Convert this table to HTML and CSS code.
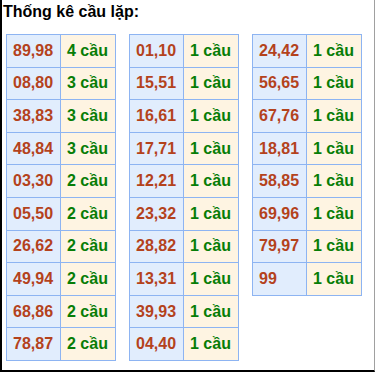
FILE: index.html
```html
<!DOCTYPE html>
<html>
<head>
<meta charset="utf-8">
<link rel="stylesheet" href="styles.css">
</head>
<body>
<div class="box">
  <div class="title">Thống kê cầu lặp:</div>
  <div class="tables">
    <table class="tk">
      <tr><td class="n">89,98</td><td class="c">4 cầu</td></tr>
      <tr><td class="n">08,80</td><td class="c">3 cầu</td></tr>
      <tr><td class="n">38,83</td><td class="c">3 cầu</td></tr>
      <tr><td class="n">48,84</td><td class="c">3 cầu</td></tr>
      <tr><td class="n">03,30</td><td class="c">2 cầu</td></tr>
      <tr><td class="n">05,50</td><td class="c">2 cầu</td></tr>
      <tr><td class="n">26,62</td><td class="c">2 cầu</td></tr>
      <tr><td class="n">49,94</td><td class="c">2 cầu</td></tr>
      <tr><td class="n">68,86</td><td class="c">2 cầu</td></tr>
      <tr><td class="n">78,87</td><td class="c">2 cầu</td></tr>
    </table>
    <table class="tk">
      <tr><td class="n">01,10</td><td class="c">1 cầu</td></tr>
      <tr><td class="n">15,51</td><td class="c">1 cầu</td></tr>
      <tr><td class="n">16,61</td><td class="c">1 cầu</td></tr>
      <tr><td class="n">17,71</td><td class="c">1 cầu</td></tr>
      <tr><td class="n">12,21</td><td class="c">1 cầu</td></tr>
      <tr><td class="n">23,32</td><td class="c">1 cầu</td></tr>
      <tr><td class="n">28,82</td><td class="c">1 cầu</td></tr>
      <tr><td class="n">13,31</td><td class="c">1 cầu</td></tr>
      <tr><td class="n">39,93</td><td class="c">1 cầu</td></tr>
      <tr><td class="n">04,40</td><td class="c">1 cầu</td></tr>
    </table>
    <table class="tk">
      <tr><td class="n">24,42</td><td class="c">1 cầu</td></tr>
      <tr><td class="n">56,65</td><td class="c">1 cầu</td></tr>
      <tr><td class="n">67,76</td><td class="c">1 cầu</td></tr>
      <tr><td class="n">18,81</td><td class="c">1 cầu</td></tr>
      <tr><td class="n">58,85</td><td class="c">1 cầu</td></tr>
      <tr><td class="n">69,96</td><td class="c">1 cầu</td></tr>
      <tr><td class="n">79,97</td><td class="c">1 cầu</td></tr>
      <tr><td class="n">99</td><td class="c">1 cầu</td></tr>
    </table>
  </div>
</div>
</body>
</html>
```
FILE: styles.css
```css
html, body {
  margin: 0;
  padding: 0;
  background: #fff;
}
.box {
  box-sizing: border-box;
  width: 375px;
  height: 372px;
  border-left: 2px solid #000;
  border-bottom: 2px solid #000;
  border-right: 1px solid #a0a0a0;
  font-family: "Liberation Sans", Arial, sans-serif;
  font-weight: bold;
  overflow: hidden;
}
.title {
  font-size: 16px;
  line-height: 18px;
  padding: 3px 0 0 1px;
  color: #000;
  height: 31px;
  box-sizing: border-box;
}
.tables {
  display: flex;
  align-items: flex-start;
  gap: 13px;
  padding: 3px 0 0 4px;
}
.tk {
  border-collapse: collapse;
  border: 1px solid #8db4f2;
}
.tk td {
  border: 1px solid #8db4f2;
  height: 32.6px;
  padding: 0 0 0 6px;
  box-sizing: border-box;
  font-size: 16px;
  text-align: left;
  vertical-align: middle;
}
.tk .n {
  width: 54px;
  background: #e1edfd;
  color: #b4421c;
}
.tk .c {
  width: 55px;
  background: #fef4e2;
  color: #077d07;
}
```
